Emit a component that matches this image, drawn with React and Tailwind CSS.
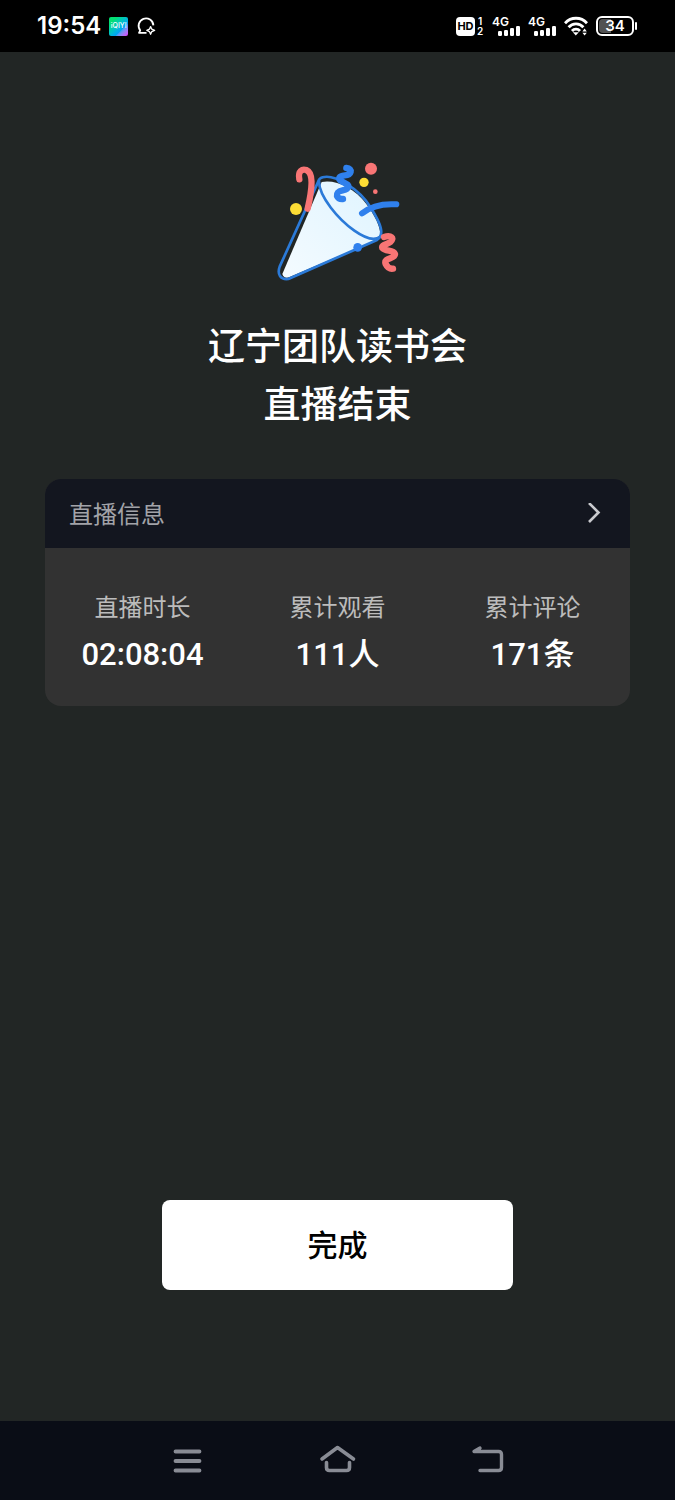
const stats = [
  { label: '直播时长', value: '02:08:04' },
  { label: '累计观看', value: '111人' },
  { label: '累计评论', value: '171条' },
];

const SignalIcon = () => (
  <div className="relative h-6 w-7">
    <span className="absolute left-0 top-0 text-[12px] font-semibold leading-[16px]">4G</span>
    <svg viewBox="0 0 28 24" className="h-6 w-7" fill="currentColor">
      <rect x="6" y="17" width="4" height="5" rx="1.2" />
      <rect x="12" y="16" width="4" height="6" rx="1.2" />
      <rect x="18" y="14" width="4" height="8" rx="1.2" />
      <rect x="24" y="12" width="4" height="10" rx="1.2" />
    </svg>
  </div>
);

const WifiIcon = () => (
  <svg viewBox="0 0 24 20" className="h-5 w-6" fill="none" stroke="currentColor" strokeWidth="2.8">
    <path d="M1 7.2C7 .6 17 .6 23 7.2" />
    <path d="M4.6 11.2c4-4.5 10.8-4.5 14.8 0" />
    <path d="M8 15c2.2-2.6 5.8-2.6 8 0" />
    <path d="M8.8 16.2h6L11.8 19.6z" fill="currentColor" stroke="none" />
    <path d="M18.4 15.4l2.2-2.8 2.2 2.8zM18.4 16.8l2.2 2.8 2.2-2.8z" fill="currentColor" stroke="none" />
  </svg>
);

const StatusBar = () => (
  <header className="flex h-[52px] items-center justify-between bg-black pl-[37px] pr-[41px] text-white">
    <div className="flex items-center">
      <time className="text-[24px] font-semibold leading-8">19:54</time>
      <span className="ml-2 flex h-[19px] w-[19px] items-center justify-center rounded-xs bg-linear-to-br from-green-400 from-20% via-sky-500 via-65% to-fuchsia-500 text-[7px] font-medium">
        iQIYI
      </span>
      <svg viewBox="0 0 20 20" className="ml-2 h-5 w-5" fill="none" stroke="currentColor" strokeWidth="1.8" strokeLinejoin="round">
        <path d="M10.500 16.800H3l1.200-2.400A7.400 7.400 0 1 1 17.400 9.400" />
        <path d="M14.6 10.6l1.2 2.6 2.8 1.2-2.8 1.2-1.2 2.6-1.2-2.6-2.6-1.2 2.6-1.2z" strokeWidth="1.3" />
      </svg>
    </div>

    <div className="flex items-center gap-2">
      <div className="flex items-center gap-px">
        <span className="flex h-[19px] w-[19px] items-center justify-center rounded-sm bg-white text-[11px] font-bold text-black">
          HD
        </span>
        <span className="flex w-2 flex-col items-center text-[10px] font-semibold leading-[10px]">
          <span>1</span>
          <span>2</span>
        </span>
      </div>
      <SignalIcon />
      <SignalIcon />
      <WifiIcon />
      <div className="relative flex h-5 w-[38px] items-center justify-center rounded-md border-2 border-white">
        <span className="absolute inset-y-px left-px w-3 rounded-l-sm bg-neutral-600" />
        <span className="relative text-[15px] font-semibold leading-4">34</span>
        <span className="absolute -right-[5px] top-1 h-2 w-0.5 rounded-full bg-white" />
      </div>
    </div>
  </header>
);

const PartyPopper = () => (
  <svg viewBox="8 0 450 420" className="h-[140px] w-[150px]" fill="none" strokeLinecap="round" strokeLinejoin="round">
    <defs>
      <linearGradient id="cone" x1="0" y1="1" x2="1" y2="0">
        <stop offset="0" stopColor="#f4fbff" />
        <stop offset="1" stopColor="#dff4ff" />
      </linearGradient>
    </defs>
    {/* Cone */}
    <path d="M184 96C225 88 280 112 318 162C346 200 366 240 358 266L86 382Q70 386 66 372Z" fill="url(#cone)" />
    <path
      d="M175 92L58 350C50 372 60 390 84 387L350 270C374 254 362 222 332 174C296 114 220 72 187 82Q176 86 175 92Z"
      stroke="#2b7ad8"
      strokeWidth="8"
    />
    <path d="M176 94C176 140 234 208 282 242C316 266 344 272 360 260" stroke="#2b7ad8" strokeWidth="8" />
    <circle cx="292" cy="292" r="13" fill="#2f80ed" />

    {/* Streamers */}
    <path d="M117 88C112 62 126 56 138 60C158 68 158 106 142 176" stroke="#f87575" strokeWidth="19" />
    <path
      d="M258 54C280 56 272 76 254 76C236 78 230 86 244 94C260 102 270 106 260 116C250 124 228 118 230 138Q234 148 248 147"
      stroke="#2f80ed"
      strokeWidth="19"
    />
    <path d="M305 190C330 170 364 160 408 163" stroke="#2f80ed" strokeWidth="18" />
    <path
      d="M371 261C392 254 404 264 390 276C380 284 362 284 366 294C376 306 398 298 404 312C406 328 368 322 376 342Q384 358 398 356"
      stroke="#f87575"
      strokeWidth="19"
    />

    {/* Confetti */}
    <circle cx="332" cy="56" r="18" fill="#f87575" />
    <circle cx="345" cy="125" r="7" fill="#f87575" />
    <circle cx="311" cy="97" r="14" fill="#fddd35" />
    <circle cx="107" cy="177" r="18" fill="#fddd35" />
  </svg>
);

const LiveInfoCard = () => (
  <section className="mt-[45px] w-full overflow-hidden rounded-2xl bg-[#323232]">
    <button type="button" className="flex w-full items-center justify-between bg-[#13161f] px-6 pb-[15px] pt-[18px] text-2xl leading-9 text-[#a2a3a8]">
      直播信息
      <svg viewBox="0 0 24 24" className="h-6 w-6" fill="none" stroke="#c9cace" strokeWidth="2.6">
        <path d="M7 0l9.500 9.500L7 19" />
      </svg>
    </button>
    <dl className="grid grid-cols-3 pb-[23px] pt-[41px] text-center">
      {stats.map((stat) => (
        <div key={stat.label}>
          <dt className="text-2xl leading-[38px] text-[#bcbcbc]">{stat.label}</dt>
          <dd className="font-['Roboto','Noto_Sans_CJK_SC',sans-serif] text-[31px] font-medium leading-[56px] text-white">
            {stat.value}
          </dd>
        </div>
      ))}
    </dl>
  </section>
);

const NavBar = () => (
  <nav className="flex h-[79px] items-center justify-center gap-[110px] bg-[#0a0d16] text-[#898c95]">
    <button type="button" aria-label="菜单">
      <svg viewBox="0 0 40 40" className="h-10 w-10" fill="none" stroke="currentColor" strokeWidth="3.8" strokeLinecap="round">
        <path d="M7.500 10.500h24M7.500 20h24M7.500 29.500h24" />
      </svg>
    </button>
    <button type="button" aria-label="主页">
      <svg viewBox="0 0 40 40" className="h-10 w-10" fill="none" stroke="currentColor" strokeWidth="3.6" strokeLinecap="round" strokeLinejoin="round">
        <path d="M4 18L19.500 6.500l16 11.500" />
        <path d="M8.500 21.500V26.500q0 3 3 3h17q3 0 3-3v-5" />
      </svg>
    </button>
    <button type="button" aria-label="返回">
      <svg viewBox="0 0 40 40" className="h-10 w-10" fill="none" stroke="currentColor" strokeWidth="3.400" strokeLinecap="round" strokeLinejoin="round">
        <path d="M12 7L6 10.500H30.500q3 0 3 3v13q0 3-3 3H12" />
        <path d="M7 10L12 7V10z" fill="currentColor" strokeWidth="2" />
      </svg>
    </button>
  </nav>
);

const App = () => {
  return (
    <div className="flex min-h-screen flex-col bg-[#222625] font-['Inter','Noto_Sans_CJK_SC',sans-serif]">
      <StatusBar />
      <main className="flex flex-1 flex-col items-center px-[45px] pb-[131px] pt-[98px]">
        <PartyPopper />
        <h1 className="mt-7 text-center text-[37px] font-medium leading-[58px] text-white">
          辽宁团队读书会
          <br />
          直播结束
        </h1>
        <LiveInfoCard />
        <button
          type="button"
          className="mt-auto h-[90px] w-3/5 rounded-lg bg-white text-[30px] font-medium text-black"
        >
          完成
        </button>
      </main>
      <NavBar />
    </div>
  );
};

export default App;
